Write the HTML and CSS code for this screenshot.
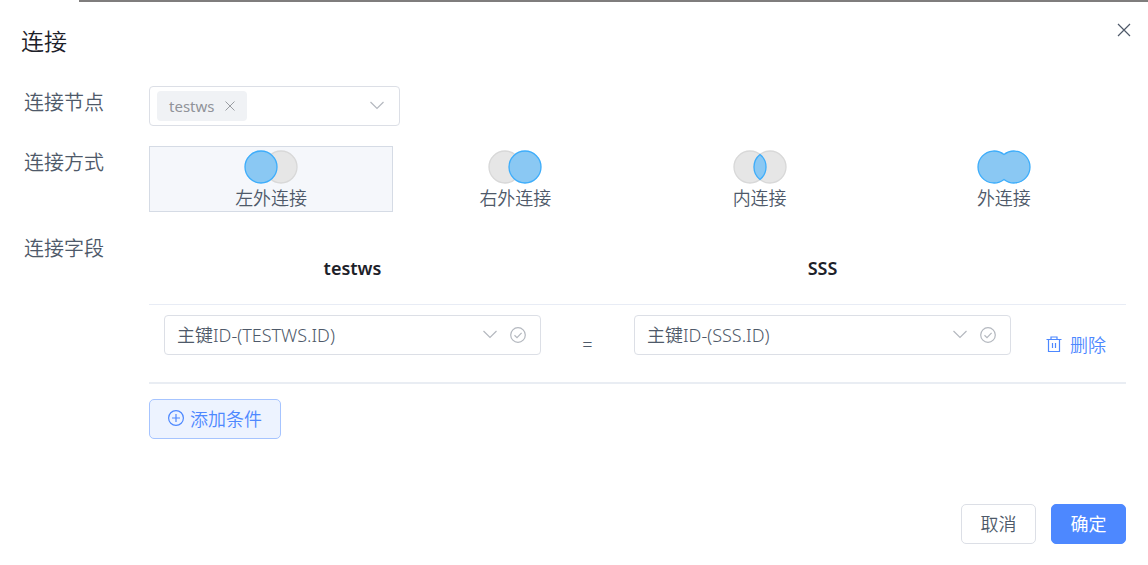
FILE: index.html
```html
<!DOCTYPE html>
<html lang="zh-CN">
<head>
    <meta charset="UTF-8">
    <meta name="viewport" content="width=device-width, initial-scale=1.0">
    <title>连接</title>
    <link rel="stylesheet" href="styles.css">
</head>
<body>
    <!-- 图标 -->
    <svg class="sprite" aria-hidden="true">
        <symbol id="arrow" viewBox="0 0 16 16">
            <path d="M1.500 4L8 10.500l6.500-6.500"/>
        </symbol>
        <symbol id="close" viewBox="0 0 16 16">
            <path d="M2 2l12 12M14 2L2 14"/>
        </symbol>
        <symbol id="check" viewBox="0 0 16 16">
            <circle cx="8" cy="8" r="7.3"/>
            <path d="M4.500 8.300L7 10.700l4.600-4.800"/>
        </symbol>
        <symbol id="plus" viewBox="0 0 16 16">
            <circle cx="8" cy="8" r="7.4"/>
            <path d="M8 4v8M4 8h8"/>
        </symbol>
        <symbol id="trash" viewBox="0 0 16 16">
            <path d="M.5 3.500h15M5 3.500V1h6v2.500M2.500 3.500v12h11v-12M6.500 7v5M9.500 7v5"/>
        </symbol>
    </svg>

    <div class="drawer">
        <div class="header">
            <h1 class="title">连接</h1>
            <button class="close" type="button" aria-label="关闭">
                <svg class="icon"><use href="#close"/></svg>
            </button>
        </div>

        <form class="form">
            <div class="row">
                <label class="label" for="node">连接节点</label>
                <div class="content">
                    <div class="select node-select">
                        <span class="tag">testws
                            <button class="tag-close" type="button" aria-label="移除"><svg class="icon"><use href="#close"/></svg></button>
                        </span>
                        <select id="node"><option></option></select>
                        <svg class="icon"><use href="#arrow"/></svg>
                    </div>
                </div>
            </div>

            <!-- 连接方式 -->
            <div class="row" role="radiogroup" aria-labelledby="type-label">
                <span class="label" id="type-label">连接方式</span>
                <div class="content types">
                    <label class="type">
                        <input type="radio" name="type" value="left" checked>
                        <svg class="venn" viewBox="0 0 54 34">
                            <circle class="off" cx="37" cy="17" r="16"/>
                            <circle class="on" cx="17" cy="17" r="16"/>
                        </svg>
                        <span>左外连接</span>
                    </label>
                    <label class="type">
                        <input type="radio" name="type" value="right">
                        <svg class="venn" viewBox="0 0 54 34">
                            <circle class="off" cx="17" cy="17" r="16"/>
                            <circle class="on" cx="37" cy="17" r="16"/>
                        </svg>
                        <span>右外连接</span>
                    </label>
                    <label class="type">
                        <input type="radio" name="type" value="inner">
                        <svg class="venn" viewBox="0 0 54 34">
                            <circle class="off" cx="17" cy="17" r="16"/>
                            <circle class="off" cx="37" cy="17" r="16"/>
                            <path class="on" d="M27 4.500a16 16 0 0 1 0 25a16 16 0 0 1 0-25z"/>
                        </svg>
                        <span>内连接</span>
                    </label>
                    <label class="type">
                        <input type="radio" name="type" value="full">
                        <svg class="venn" viewBox="0 0 54 34">
                            <path class="on" d="M27 4.500a16 16 0 1 1 0 25a16 16 0 1 1 0-25z"/>
                        </svg>
                        <span>外连接</span>
                    </label>
                </div>
            </div>

            <!-- 连接字段 -->
            <div class="row">
                <span class="label">连接字段</span>
                <div class="content">
                    <table class="fields">
                        <thead>
                            <tr>
                                <th id="left-node">testws</th>
                                <th class="equal"></th>
                                <th id="right-node">SSS</th>
                                <th class="action"></th>
                            </tr>
                        </thead>
                        <tbody>
                            <tr>
                                <td>
                                    <div class="select field-select">
                                        <select aria-labelledby="left-node"><option>主键ID-(TESTWS.ID)</option></select>
                                        <svg class="icon"><use href="#arrow"/></svg>
                                        <svg class="icon"><use href="#check"/></svg>
                                    </div>
                                </td>
                                <td class="equal">=</td>
                                <td>
                                    <div class="select field-select">
                                        <select aria-labelledby="right-node"><option>主键ID-(SSS.ID)</option></select>
                                        <svg class="icon"><use href="#arrow"/></svg>
                                        <svg class="icon"><use href="#check"/></svg>
                                    </div>
                                </td>
                                <td class="action">
                                    <button class="remove" type="button"><svg class="icon"><use href="#trash"/></svg>删除</button>
                                </td>
                            </tr>
                        </tbody>
                    </table>
                    <button class="btn add" type="button"><svg class="icon"><use href="#plus"/></svg>添加条件</button>
                </div>
            </div>

            <div class="footer">
                <button class="btn" type="button">取消</button>
                <button class="btn primary" type="submit">确定</button>
            </div>
        </form>
    </div>
</body>
</html>
```
FILE: styles.css
```css
* {
    box-sizing: border-box;
}

body {
    margin: 0;
    background-color: #fff;
    color: #4e5969;
    font-family: "Noto Sans", "Noto Sans CJK SC", sans-serif;
    font-size: 18px;
    font-weight: 350;
}

button,
select {
    padding: 0;
    border: 0;
    background: none;
    color: inherit;
    font: inherit;
    cursor: pointer;
}

.sprite {
    display: none;
}

.icon {
    flex: none;
    display: block;
    width: 16px;
    height: 16px;
    fill: none;
    stroke: currentColor;
    stroke-width: 1.2;
}

/* 顶部露出的遮罩 */
.drawer::before {
    content: '';
    display: block;
    height: 2px;
    margin-left: 79px;
    background-color: #7f7d7d;
}

.header {
    display: flex;
    justify-content: space-between;
    align-items: flex-start;
    padding: 16px 12px 30px 21px;
}

.title {
    margin: 8px 0 0;
    color: #1d2129;
    font-size: 23px;
    font-weight: 350;
    line-height: 30px;
}

.close {
    display: flex;
    align-items: center;
    justify-content: center;
    width: 24px;
    height: 24px;
}

.form {
    padding: 0 22px;
}

.row {
    display: flex;
    margin-bottom: 20px;
}

.label {
    flex: none;
    width: 127px;
    padding-left: 2px;
    font-size: 20px;
    line-height: 34px;
}

.content {
    flex: 1;
    min-width: 0;
}

/* 下拉框 */
.select {
    display: flex;
    align-items: center;
    height: 40px;
    border: 1px solid #dcdfe6;
    border-radius: 4px;
    color: #b4b8bf;
}

.select select {
    flex: 1;
    min-width: 0;
    height: 100%;
    color: #4e5969;
    appearance: none;
}

.node-select {
    width: 251px;
    padding: 0 14px 0 7px;
}

.tag {
    display: flex;
    align-items: center;
    gap: 10px;
    height: 30px;
    padding: 0 11px 0 12px;
    border-radius: 4px;
    background-color: #f0f2f5;
    color: #909399;
    font-size: 15px;
    font-weight: 400;
}

.tag-close .icon {
    width: 12px;
    height: 12px;
}

.field-select {
    gap: 12px;
    margin-bottom: 17px;
    padding: 0 14px 0 12px;
}

/* 连接方式 */
.types {
    display: grid;
    grid-template-columns: repeat(4, 1fr);
}

.type {
    display: flex;
    flex-direction: column;
    align-items: center;
    height: 66px;
    padding-top: 3px;
    border: 1px solid transparent;
    line-height: 28px;
    cursor: pointer;
}

.type:has(input:checked) {
    border-color: #d5dbe5;
    background-color: #f5f7fb;
}

.type input {
    position: absolute;
    opacity: 0;
}

.venn {
    flex: none;
    width: 54px;
    height: 34px;
}

.on {
    fill: #8ac8f3;
    stroke: #3dadfb;
    stroke-width: 1.3;
}

.off {
    fill: #e6e6e6;
    stroke: #d8d8d8;
    stroke-width: 1.3;
}

/* 连接字段 */
.fields {
    width: 100%;
    border-collapse: separate;
    border-spacing: 0;
    border-bottom: 2px solid #e9edf3;
    table-layout: fixed;
}

.fields th {
    height: 73px;
    padding: 0;
    border-bottom: 1px solid #e8ecf5;
    color: #1d2129;
    font-weight: 600;
}

.fields td {
    padding: 10px 15px;
}

.fields .equal {
    width: 63px;
    padding: 0;
    text-align: center;
}

.fields .action {
    width: 100px;
    padding: 0;
}

.remove {
    display: flex;
    align-items: center;
    gap: 8px;
    margin: 0 auto;
    color: #4d88ff;
}

/* 按钮 */
.btn {
    display: flex;
    align-items: center;
    justify-content: center;
    gap: 6px;
    min-width: 75px;
    height: 40px;
    padding: 0 18px 2px;
    border: 1px solid #dcdfe6;
    border-radius: 5px;
}

.add {
    margin-top: 15px;
    border-color: #a6c4ff;
    background-color: #edf3ff;
    color: #4d88ff;
}

.primary {
    border-color: #4d88ff;
    background-color: #4d88ff;
    color: #fff;
    font-weight: 400;
}

.footer {
    display: flex;
    justify-content: flex-end;
    gap: 15px;
    padding: 45px 0 21px;
}
```
